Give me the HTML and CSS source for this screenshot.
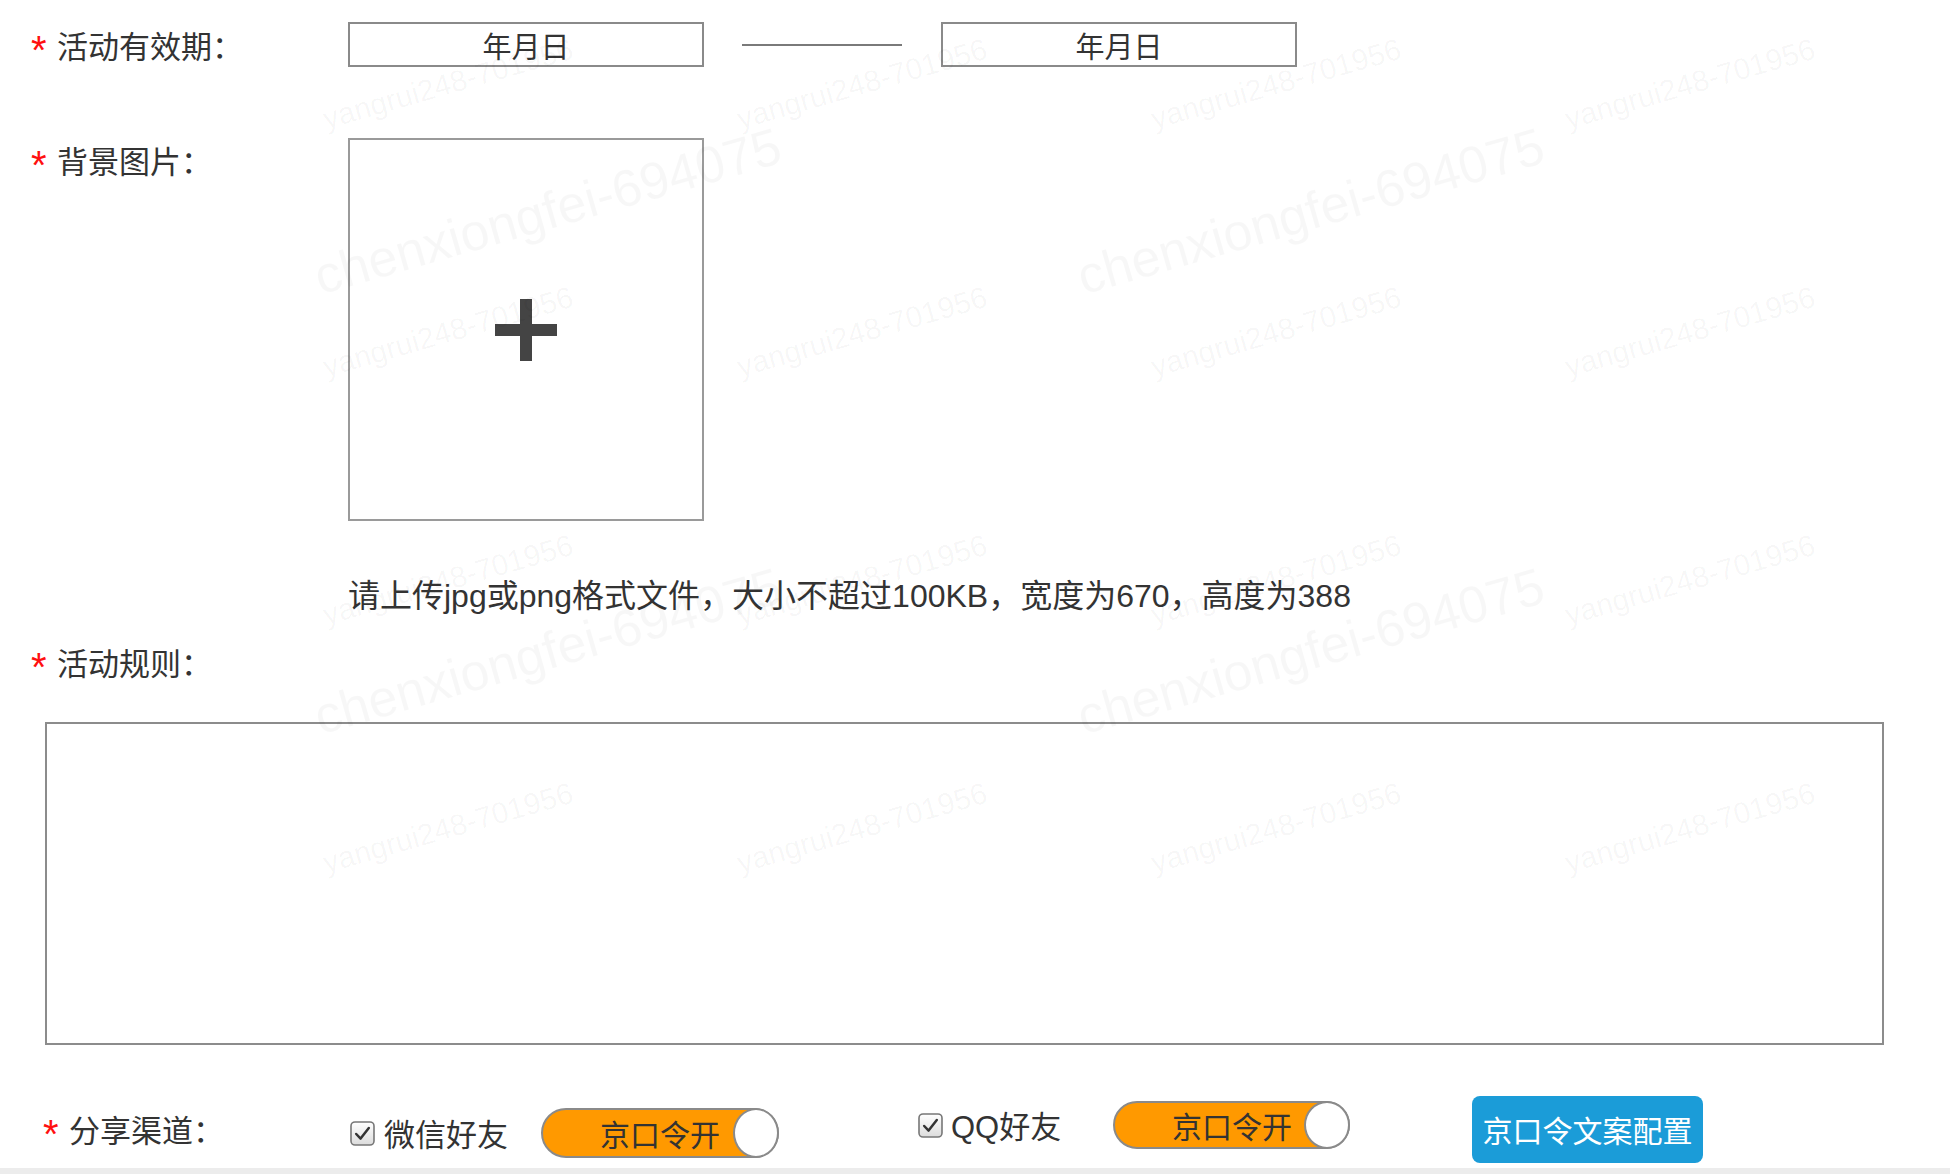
FILE: index.html
```html
<!DOCTYPE html>
<html lang="zh-CN">
<head>
<meta charset="utf-8">
<title>活动配置</title>
<link rel="stylesheet" href="styles.css">
</head>
<body>
<div class="form">
  <div class="row row-date">
    <div class="label"><span class="star">*</span><span class="label-text">活动有效期：</span></div>
    <div class="date-box">年月日</div>
    <div class="dash"></div>
    <div class="date-box">年月日</div>
  </div>

  <div class="row row-image">
    <div class="label"><span class="star">*</span><span class="label-text">背景图片：</span></div>
    <div class="upload">
      <svg class="plus" width="62" height="62" viewBox="0 0 62 62"><rect x="25" y="0" width="12" height="62" fill="#444"/><rect x="0" y="25" width="62" height="12" fill="#444"/></svg>
    </div>
  </div>

  <div class="hint">请上传jpg或png格式文件，大小不超过100KB，宽度为670，高度为388</div>

  <div class="row row-rule">
    <div class="label"><span class="star">*</span><span class="label-text">活动规则：</span></div>
  </div>
  <textarea class="rules"></textarea>

  <div class="row row-share">
    <div class="label label-share"><span class="star">*</span><span class="label-text">分享渠道：</span></div>
    <div class="channel channel-wx">
      <svg class="check" width="25" height="25" viewBox="0 0 25 25"><defs><linearGradient id="cg" x1="0" y1="0" x2="0" y2="1"><stop offset="0" stop-color="#ffffff"/><stop offset="1" stop-color="#dcdcdc"/></linearGradient></defs><rect x="1" y="1" width="23" height="23" rx="4" fill="url(#cg)" stroke="#777" stroke-width="1.6"/><path d="M6.2 13 L10.6 17.6 L18.8 7" fill="none" stroke="#333" stroke-width="2.5" stroke-linecap="round" stroke-linejoin="round"/></svg>
      <span class="channel-name">微信好友</span>
      <div class="toggle toggle-wx"><span class="toggle-text">京口令开</span><span class="knob"></span></div>
    </div>
    <div class="channel channel-qq">
      <svg class="check" width="25" height="25" viewBox="0 0 25 25"><rect x="1" y="1" width="23" height="23" rx="4" fill="url(#cg)" stroke="#777" stroke-width="1.6"/><path d="M6.2 13 L10.6 17.6 L18.8 7" fill="none" stroke="#333" stroke-width="2.5" stroke-linecap="round" stroke-linejoin="round"/></svg>
      <span class="channel-name channel-name-latin">QQ好友</span>
      <div class="toggle toggle-qq"><span class="toggle-text">京口令开</span><span class="knob"></span></div>
    </div>
    <button class="config-btn">京口令文案配置</button>
  </div>
  <div class="bottom-bar"></div>
</div>

<div class="wm-wrap" aria-hidden="true">
  <div class="wm wm-a">
    <span>yangrui248-701956</span><span>yangrui248-701956</span><span>yangrui248-701956</span><span>yangrui248-701956</span>
    <span>yangrui248-701956</span><span>yangrui248-701956</span><span>yangrui248-701956</span><span>yangrui248-701956</span>
    <span>yangrui248-701956</span><span>yangrui248-701956</span><span>yangrui248-701956</span><span>yangrui248-701956</span>
    <span>yangrui248-701956</span><span>yangrui248-701956</span><span>yangrui248-701956</span><span>yangrui248-701956</span>
  </div>
  <div class="wm wm-b">
    <span>chenxiongfei-694075</span><span>chenxiongfei-694075</span>
    <span>chenxiongfei-694075</span><span>chenxiongfei-694075</span>
  </div>
</div>
</body>
</html>
```

FILE: styles.css
```css
html, body {
  margin: 0;
  padding: 0;
  width: 1950px;
  height: 1174px;
  overflow: hidden;
  background: #ffffff;
}
body {
  position: relative;
  font-family: "Noto Sans CJK SC", "Liberation Sans", sans-serif;
  color: #333333;
}
.form {
  padding-top: 22px;
}
.row {
  display: flex;
}
.label {
  width: 348px;
  box-sizing: border-box;
  padding-left: 31px;
  display: flex;
  align-items: flex-start;
  font-size: 31px;
  line-height: 44px;
  height: 44px;
  flex-shrink: 0;
}
.star {
  color: #ff1010;
  font-size: 40px;
  width: 26px;
  height: 44px;
  line-height: 55px;
  font-family: "Liberation Sans", sans-serif;
}
.label-text {
  white-space: nowrap;
}

/* row 1 */
.row-date {
  align-items: center;
  height: 45px;
}
.date-box {
  width: 356px;
  height: 45px;
  box-sizing: border-box;
  border: 2px solid #8a8a8a;
  font-size: 29px;
  line-height: 43px;
  text-align: center;
  color: #333;
  overflow: hidden;
}
.dash {
  width: 160px;
  height: 2px;
  background: #7a7a7a;
  margin: 0 39px 0 38px;
}

/* row 2 */
.row-image {
  margin-top: 71px;
  align-items: flex-start;
}
.upload {
  width: 356px;
  height: 383px;
  box-sizing: border-box;
  border: 2px solid #9a9a9a;
  display: flex;
  align-items: center;
  justify-content: center;
}
.hint {
  margin: 51px 0 0 348px;
  font-family: "Liberation Sans", "Noto Sans CJK SC", sans-serif;
  font-size: 32px;
  line-height: 49px;
  height: 44px;
  white-space: nowrap;
}

/* row 3 */
.row-rule {
  margin-top: 24px;
}
.rules {
  display: block;
  margin: 38px 0 0 45px;
  width: 1839px;
  height: 323px;
  box-sizing: border-box;
  border: 2px solid #8c8c8c;
  border-radius: 0;
  resize: none;
  background: transparent;
  outline: none;
  padding: 0;
}

/* row 4 */
.row-share {
  margin-top: 50px;
  height: 68px;
  align-items: center;
}
.label-share {
  padding-left: 43px;
  width: 350px;
  height: 44px;
}
.channel {
  display: flex;
  align-items: center;
}
.channel-wx {
  margin-top: 8px;
}
.channel-qq {
  margin-left: 139px;
  margin-top: -8px;
}
.check {
  display: block;
  flex-shrink: 0;
}
.channel-name {
  font-size: 31px;
  line-height: 44px;
  height: 44px;
  margin-left: 9px;
  white-space: nowrap;
}
.channel-name-latin {
  font-family: "Liberation Sans", "Noto Sans CJK SC", sans-serif;
  line-height: 49px;
}
.channel-wx .channel-name {
  width: 124px;
}
.channel-qq .channel-name {
  margin-left: 8px;
  width: 113px;
}
.toggle {
  display: flex;
  align-items: center;
  box-sizing: border-box;
  height: 50px;
  border: 2px solid #8a8a8a;
  border-radius: 25px;
  background: #ff9900;
  margin-left: 33px;
}
.toggle-wx {
  width: 238px;
}
.toggle-qq {
  width: 237px;
  height: 48px;
  margin-left: 49px;
}
.toggle-text {
  flex: 1;
  padding-left: 57px;
  font-size: 30px;
  line-height: 40px;
  color: #333;
  white-space: nowrap;
}
.knob {
  width: 46px;
  height: calc(100% + 4px);
  box-sizing: border-box;
  border: 2px solid #8a8a8a;
  border-radius: 50%;
  background: #ffffff;
  margin-right: -2px;
  flex-shrink: 0;
}
.config-btn {
  margin-left: 122px;
  width: 231px;
  height: 67px;
  border: none;
  border-radius: 8px;
  background: #1b9cd8;
  color: #ffffff;
  font-family: "Noto Sans CJK SC", sans-serif;
  font-size: 30px;
  padding: 0;
  white-space: nowrap;
}
.bottom-bar {
  margin-top: 5px;
  height: 20px;
  background: #ececec;
}

/* watermarks */
.wm-wrap {
  position: absolute;
  left: 0;
  top: 0;
  width: 1950px;
  height: 1174px;
  overflow: hidden;
  pointer-events: none;
}
.wm {
  position: absolute;
  display: grid;
  color: rgba(0, 0, 0, 0.04);
  font-family: "Liberation Sans", sans-serif;
  white-space: nowrap;
}
.wm span {
  display: flex;
  align-items: center;
  justify-content: center;
  transform: rotate(-16deg);
}
.wm-a {
  left: 241px;
  top: -40px;
  grid-template-columns: repeat(4, 414px);
  grid-auto-rows: 248px;
  font-size: 30px;
}
.wm-b {
  left: 166px;
  top: -9px;
  grid-template-columns: repeat(2, 763px);
  grid-auto-rows: 440px;
  font-size: 52px;
  color: rgba(0, 0, 0, 0.03);
}
```
